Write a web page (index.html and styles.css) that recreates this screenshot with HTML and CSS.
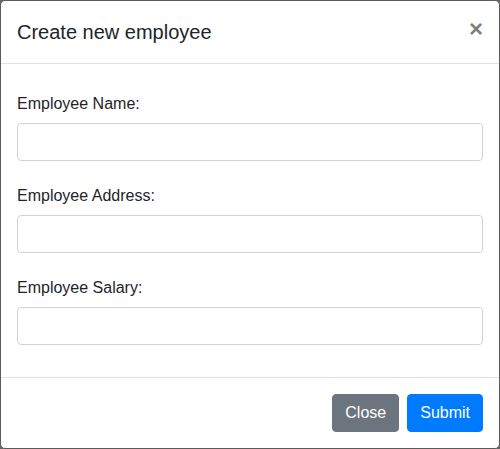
FILE: index.html
```html
<!DOCTYPE html>
<html>
<head>
<meta charset="utf-8">
<link rel="stylesheet" href="styles.css">
</head>
<body>
<div class="modal">
  <div class="modal-header">
    <h5 class="modal-title">Create new employee</h5>
    <button class="close" type="button">×</button>
  </div>
  <div class="modal-body">
    <form class="form">
      <div class="form-group">
        <label class="label">Employee Name:</label>
        <input class="form-control" type="text">
      </div>
      <div class="form-group">
        <label class="label">Employee Address:</label>
        <input class="form-control" type="text">
      </div>
      <div class="form-group">
        <label class="label">Employee Salary:</label>
        <input class="form-control" type="text">
      </div>
    </form>
  </div>
  <div class="modal-footer">
    <button class="btn btn-secondary" type="button">Close</button>
    <button class="btn btn-primary" type="button">Submit</button>
  </div>
</div>
</body>
</html>
```
FILE: styles.css
```css
html, body {
  margin: 0;
  height: 100%;
}
body {
  background: #666666;
  font-family: "Liberation Sans", Arial, sans-serif;
  font-size: 16px;
  line-height: 1.5;
  color: #212529;
}
.modal {
  box-sizing: border-box;
  height: 449px;
  background: #fff;
  border: 1px solid #5a5a5a;
  border-radius: 5px;
  display: flex;
  flex-direction: column;
}
.modal-header {
  display: flex;
  align-items: flex-start;
  justify-content: space-between;
  padding: 16px;
  border-bottom: 1px solid #dee2e6;
}
.modal-title {
  margin: 0;
  font-size: 20px;
  font-weight: 500;
  line-height: 1.5;
}
.close {
  padding: 16px;
  margin: -16px -16px -16px auto;
  background: transparent;
  border: 0;
  font-family: inherit;
  font-size: 24px;
  font-weight: 700;
  line-height: 1;
  color: #000;
  opacity: 0.5;
  text-shadow: 0 1px 0 #fff;
  cursor: pointer;
}
.modal-body {
  flex: 1;
  padding: 16px 16px 21px;
}
.form {
  margin: 0;
}
.form-group {
  padding-top: 12px;
  padding-bottom: 11px;
}
.label {
  display: block;
  margin-bottom: 7px;
}
.form-control {
  display: block;
  box-sizing: border-box;
  width: 100%;
  height: 38px;
  padding: 6px 12px;
  font-family: inherit;
  font-size: 16px;
  color: #495057;
  background: #fff;
  border: 1px solid #ced4da;
  border-radius: 4px;
  margin: 0;
}
.modal-footer {
  display: flex;
  align-items: center;
  justify-content: flex-end;
  padding: 12px;
  border-top: 1px solid #dee2e6;
}
.btn {
  margin: 4px;
  padding: 6px 12px;
  font-family: inherit;
  font-size: 16px;
  line-height: 1.5;
  color: #fff;
  border: 1px solid transparent;
  border-radius: 4px;
}
.btn-secondary {
  background: #6c757d;
  border-color: #6c757d;
}
.btn-primary {
  background: #007bff;
  border-color: #007bff;
}
```
